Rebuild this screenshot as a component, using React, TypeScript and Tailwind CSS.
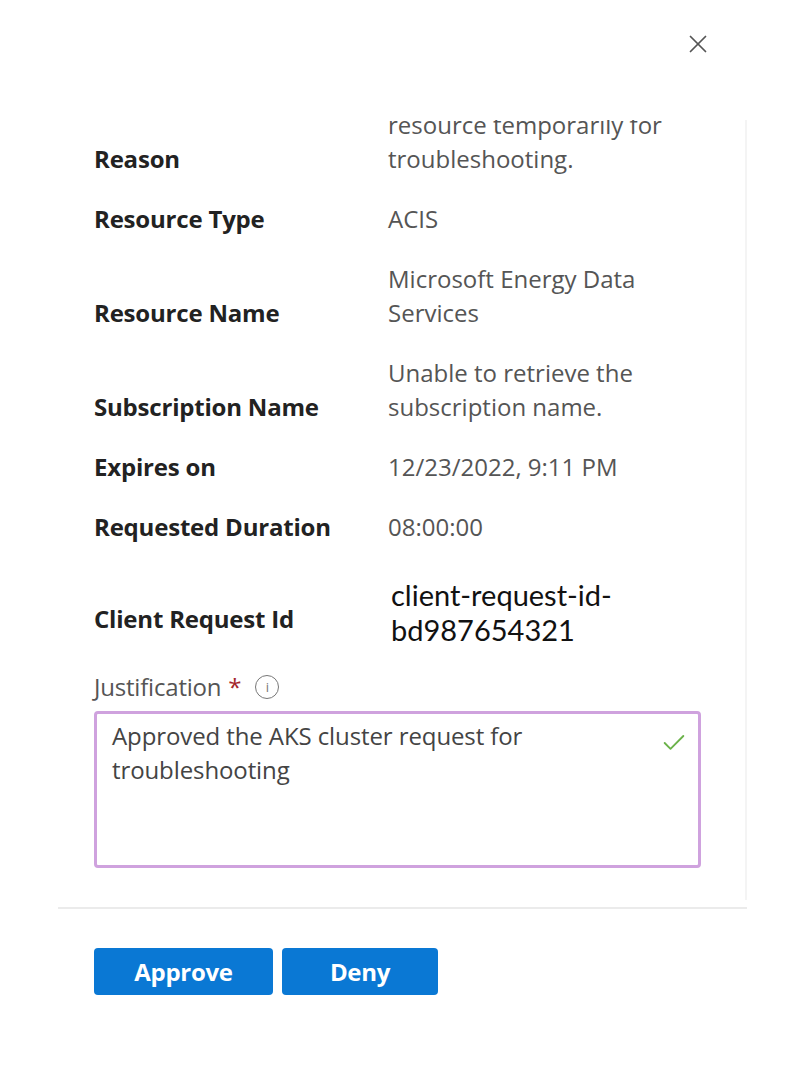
import { X, Check } from "lucide-react";

const rows: { label: string; value: string[] }[] = [
  { label: "Reason", value: ["Need access to the", "resource temporarily for", "troubleshooting."] },
  { label: "Resource Type", value: ["ACIS"] },
  { label: "Resource Name", value: ["Microsoft Energy Data", "Services"] },
  { label: "Subscription Name", value: ["Unable to retrieve the", "subscription name."] },
  { label: "Expires on", value: ["12/23/2022, 9:11 PM"] },
  { label: "Requested Duration", value: ["08:00:00"] },
];

const font = { fontFamily: '"Open Sans", "Noto Sans", sans-serif' };

export default function App() {
  return (
    <div className="h-[1070px] w-[810px] bg-white" style={font}>
      <div className="flex h-[120px] items-start justify-end pt-[29px] pr-[97px]">
        <button className="text-[#555]">
          <X size={30} strokeWidth={1.4} />
        </button>
      </div>

      <div className="ml-[58px] h-[780px] w-[689px] overflow-hidden border-r-2 border-[#f4f4f4]">
        <div className="-mt-[46px] pl-[36px]">
          <div className="grid grid-cols-[294px_1fr] items-end gap-y-[26px]">
            {rows.map((r) => (
              <div key={r.label} className="contents">
                <div className="text-[24px] leading-[34px] font-bold tracking-[-0.2px] text-[#222]">{r.label}</div>
                <div className="text-[24px] leading-[34px] text-[#555]">
                  {r.value.map((v) => (
                    <div key={v}>{v}</div>
                  ))}
                </div>
              </div>
            ))}
            <div className="mb-[11px] text-[24px] leading-[34px] font-bold tracking-[-0.2px] text-[#222]">
              Client Request Id
            </div>
            <div
              className="mt-[7px] ml-[3px] text-[29px] leading-[35px] text-[#111]"
              style={{ fontFamily: 'Lato, "Open Sans", sans-serif' }}
            >
              <div>client-request-id-</div>
              <div>bd987654321</div>
            </div>
          </div>

          <div className="mt-[23px] flex items-center text-[24px] leading-[34px] tracking-[-0.2px] text-[#555]">
            <span>
              Justification<span className="ml-[7px] text-[#a4262c]">*</span>
            </span>
            <span className="ml-[14px] flex h-[24px] w-[24px] items-center justify-center rounded-full border border-[#777] text-[13px] leading-none text-[#777]">
              i
            </span>
          </div>
          <div className="mt-[7px] flex h-[157px] w-[607px] items-start justify-between rounded-[4px] border-[3px] border-[#cfa2de] px-[15px] pt-[5px] pr-[10px]">
            <div className="text-[24px] leading-[34px] tracking-[-0.1px] text-[#444]">
              Approved the AKS cluster request for
              <br />
              troubleshooting
            </div>
            <Check className="mt-[10px] text-[#6bb24a]" size={28} strokeWidth={1.6} />
          </div>
        </div>
      </div>

      <div className="mt-[7px] ml-[58px] h-[2px] w-[689px] bg-[#ebebeb]" />

      <div className="mt-[39px] flex gap-[9px] pl-[94px]">
        <button className="h-[47px] w-[179px] rounded-[4px] bg-[#0a78d4] text-[24px] font-bold tracking-[-0.3px] text-white">
          Approve
        </button>
        <button className="h-[47px] w-[156px] rounded-[4px] bg-[#0a78d4] text-[24px] font-bold tracking-[-0.3px] text-white">
          Deny
        </button>
      </div>
    </div>
  );
}
